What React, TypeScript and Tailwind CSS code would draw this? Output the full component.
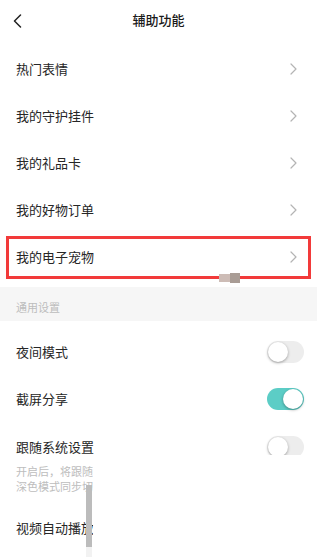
import React from 'react';

const font = { fontFamily: '"Noto Sans CJK SC", "Noto Sans", sans-serif' };

function Chevron() {
  return (
    <svg width="7" height="12" viewBox="0 0 7 12" className="shrink-0">
      <path d="M1 1l5 5-5 5" fill="none" stroke="#b4b4b4" strokeWidth="1.2" strokeLinecap="round" strokeLinejoin="round" />
    </svg>
  );
}

function Toggle({ on }: { on?: boolean }) {
  return (
    <div
      className={`relative w-[37px] h-[22px] rounded-full ${on ? 'bg-[#5ccdc6]' : 'bg-[#ededed]'}`}
    >
      <div
        className={`absolute top-[1px] w-[20px] h-[20px] rounded-full bg-white shadow-[0_1px_3px_rgba(0,0,0,0.35)] ${on ? 'right-[1px]' : 'left-[1px]'}`}
      />
    </div>
  );
}

const links = ['热门表情', '我的守护挂件', '我的礼品卡', '我的好物订单', '我的电子宠物'];

export default function App() {
  return (
    <div className="relative w-[317px] h-[557px] overflow-hidden bg-white" style={font}>
      {/* Header */}
      <div className="relative h-[40px] flex items-center justify-center">
        <svg width="9" height="14" viewBox="0 0 9 14" className="absolute left-[13px] top-[14px]">
          <path d="M7.5 1L1.5 7l6 6" fill="none" stroke="#222" strokeWidth="1.5" strokeLinecap="round" strokeLinejoin="round" />
        </svg>
        <span className="text-[13px] font-medium text-[#1a1a1a]">辅助功能</span>
      </div>

      {/* Links */}
      <div className="pt-[5px]">
        {links.map((label, i) => (
          <div key={label} className="relative h-[47px] flex items-center justify-between pl-4 pr-[20px]">
            <span className="text-[13px] text-[#262626]">{label}</span>
            <Chevron />
            {i === links.length - 1 && (
              <div className="absolute left-[6px] right-[6px] top-[3px] bottom-[1px] border-[3px] border-[#f23a3a]" />
            )}
          </div>
        ))}
      </div>

      <div className="h-[7px]" />

      {/* Section header */}
      <div className="h-[34px] bg-[#f6f6f6] flex items-center pl-4 pt-[6px]">
        <span className="text-[11px] text-[#bdbdbd]">通用设置</span>
      </div>

      {/* Toggles */}
      <div className="pt-[7px]">
        <div className="h-[47px] flex items-center justify-between pl-4 pr-[13px]">
          <span className="text-[13px] text-[#262626]">夜间模式</span>
          <Toggle />
        </div>
        <div className="h-[47px] flex items-center justify-between pl-4 pr-[13px]">
          <span className="text-[13px] text-[#262626]">截屏分享</span>
          <Toggle on />
        </div>
        <div className="pt-[14px] pl-4 pr-[13px]">
          <div className="h-[22px] flex items-center justify-between">
            <span className="text-[13px] text-[#262626]">跟随系统设置</span>
            <Toggle />
          </div>
          <p className="mt-[6px] text-[11px] leading-[15px] text-[#bdbdbd]">
            开启后，将跟随系统设置开启或关闭夜间模式，
            <br />
            深色模式同步切换
          </p>
        </div>
        <div className="mt-[10px] h-[47px] flex items-center justify-between pl-4 pr-[13px]">
          <span className="text-[13px] text-[#262626]">视频自动播放</span>
          <Toggle />
        </div>
      </div>

      {/* screenshot artifacts */}
      <div className="absolute left-[93px] top-[455px] right-0 bottom-0 bg-white" />
      <div className="absolute left-[86px] top-[485px] w-[6px] h-[62px] bg-[#bcbcbc]" />
      <div className="absolute left-[86px] top-[547px] w-[6px] h-[10px] bg-[#f2f2f2]" />
      <div className="absolute left-[219px] top-[274px] w-[11px] h-[8px] bg-[#cdbcb6]" />
      <div className="absolute left-[230px] top-[273px] w-[10px] h-[10px] bg-[#a99c95]" />
    </div>
  );
}
